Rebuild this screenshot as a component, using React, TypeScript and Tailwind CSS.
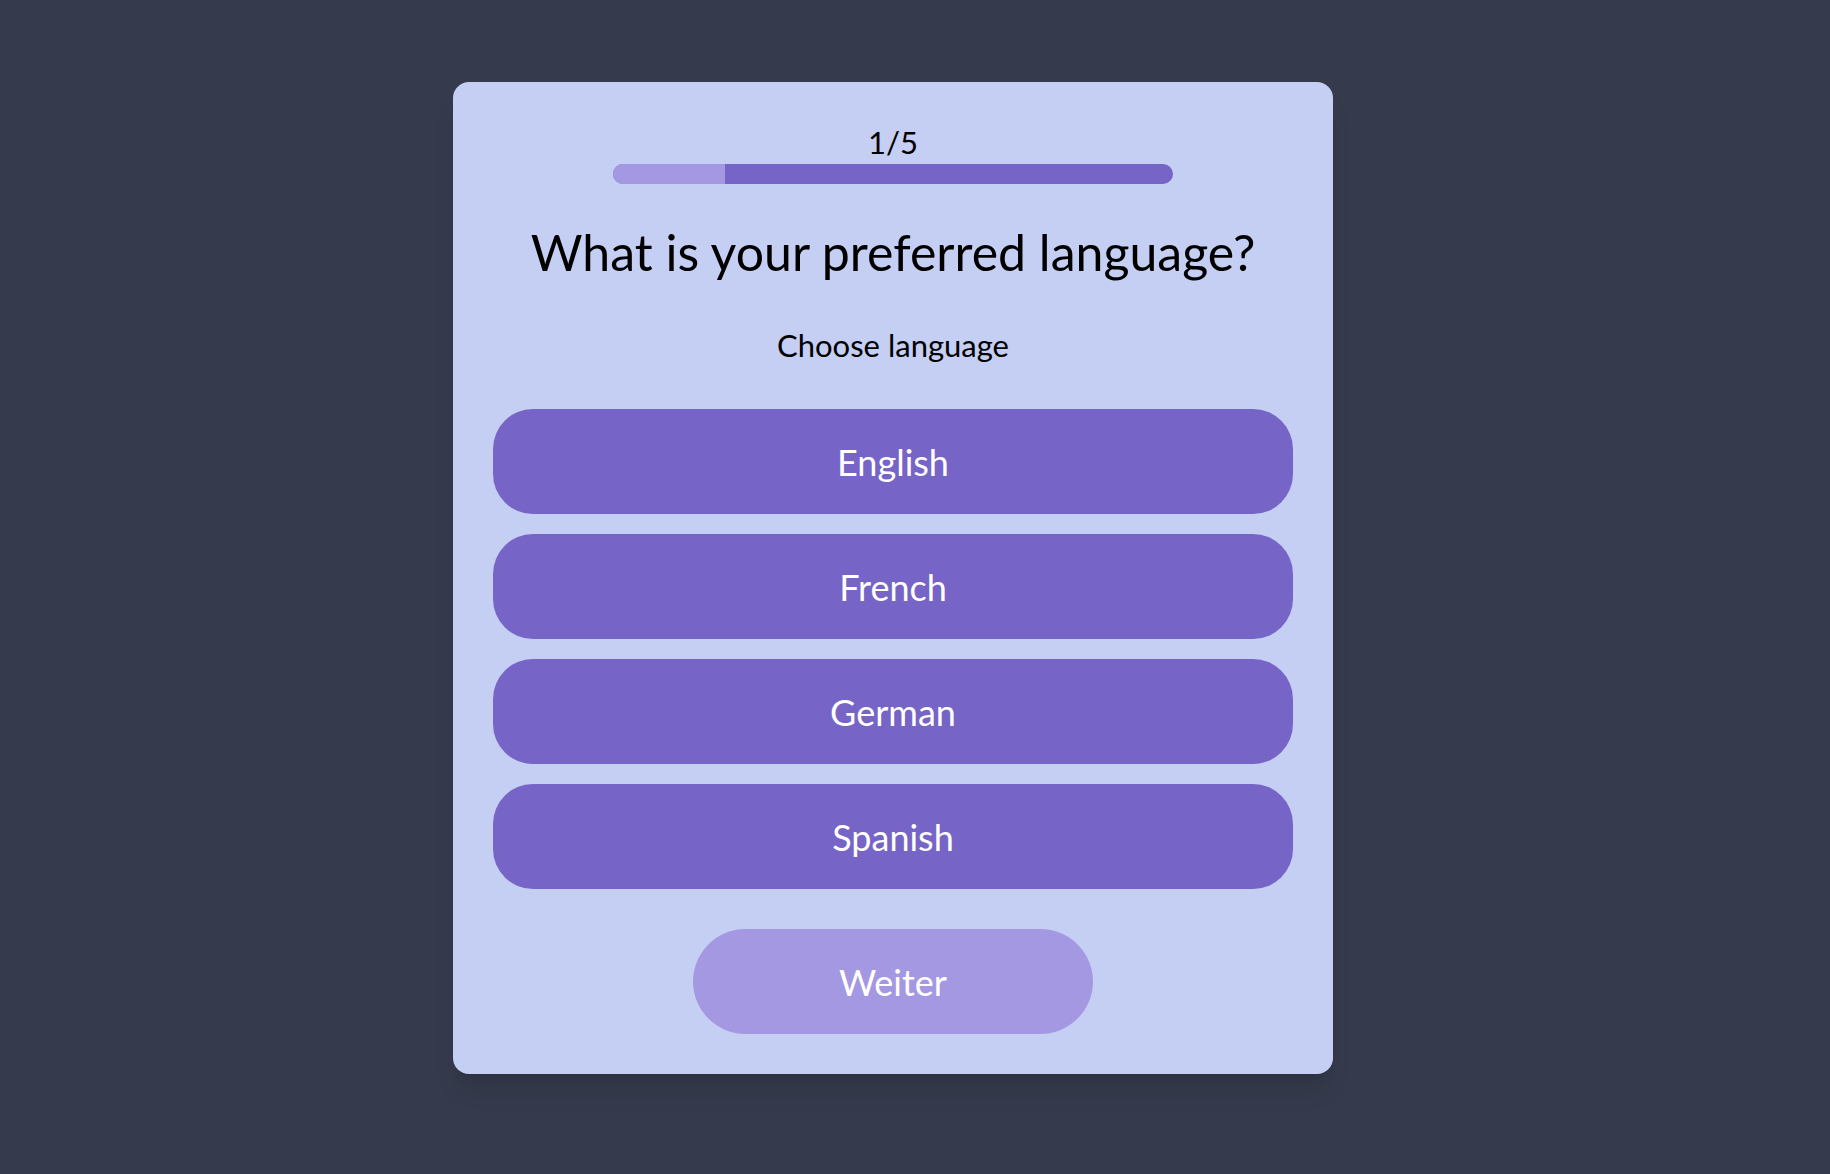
import { useState } from "react";

// Sprachen
const languages = ["English", "French", "German", "Spanish"];

const App = () => {
  const [selected, setSelected] = useState<string | null>(null);
  const step = 1;
  const total = 5;

  return (
    <div
      className="min-h-screen w-full bg-[#353b4c] flex justify-center items-start pt-[82px] pr-[44px]"
      style={{ fontFamily: "Lato, 'Noto Sans', sans-serif" }}
    >
      <div className="w-[880px] bg-[#c5cef3] rounded-2xl shadow-xl px-10 pt-[42px] pb-10 flex flex-col items-center">
        <div className="text-[31px] leading-[36px] text-black">
          {step}/{total}
        </div>
        <div className="mt-[4px] w-[560px] h-5 rounded-full bg-[#7665c6] overflow-hidden">
          <div className="h-full bg-[#a598e3]" style={{ width: `${(step / total) * 100}%` }} />
        </div>

        <h1 className="mt-[37px] text-[50px] leading-[62px] text-black">
          What is your preferred language?
        </h1>
        <p className="mt-[43px] text-[31px] leading-[38px] text-black">Choose language</p>

        <div className="mt-[45px] w-full flex flex-col gap-5">
          {languages.map((lang) => (
            <button
              key={lang}
              onClick={() => setSelected(lang)}
              className="w-full h-[105px] rounded-[40px] bg-[#7665c6] text-white text-[36px]"
            >
              {lang}
            </button>
          ))}
        </div>

        <button
          disabled={!selected}
          className="mt-10 w-[400px] h-[105px] rounded-full bg-[#a598e3] text-white text-[36px]"
        >
          Weiter
        </button>
      </div>
    </div>
  );
};

export default App;
